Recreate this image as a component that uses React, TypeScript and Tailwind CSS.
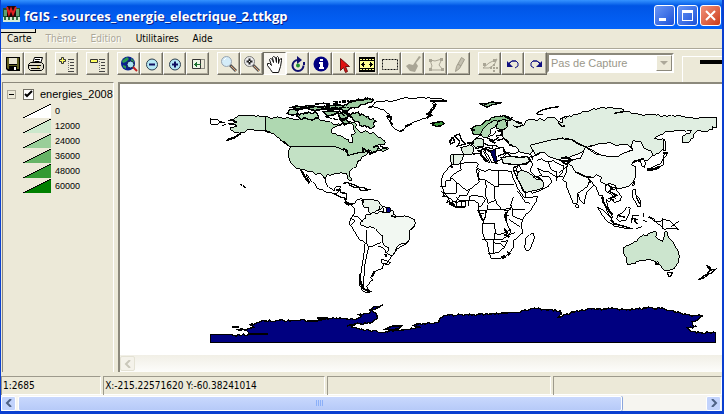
import type { ReactNode } from 'react';
import clsx from 'clsx';

const legend = [
  { label: '0', color: '#ffffff' },
  { label: '12000', color: '#cce8cc' },
  { label: '24000', color: '#99ce99' },
  { label: '36000', color: '#66b466' },
  { label: '48000', color: '#339a33' },
  { label: '60000', color: '#008000' },
];

type Tool = { label: string; icon: ReactNode; active?: boolean; disabled?: boolean };

const lens = (
  <>
    <path d="M10 10l6 6" stroke="#555" strokeWidth="3" />
    <path d="M11 11l5 5" stroke="#e0a070" strokeWidth="1" />
  </>
);

const toolGroups: Tool[][] = [
  [
    {
      label: 'Enregistrer',
      icon: (
        <>
          <path d="M2 2h14v14H4l-2-2z" fill="#000" />
          <path d="M3 3h2v11H4l-1-1zM13 3h2v11h-2z" fill="#606020" />
          <path d="M5 3h8v6H5z" fill="#e8e4d0" />
          <path d="M4 10h10v1H4z" fill="#606020" />
          <path d="M10 12h2v3h-2z" fill="#fff" />
        </>
      ),
    },
    {
      label: 'Imprimer',
      icon: (
        <g stroke="#000" fill="#fff">
          <path d="M5.500 8.500l2-6h8l-2 6" />
          <path d="M8 4.500h5M7.500 6.500h5" />
          <path d="M1.500 9.500l2-2h11l2 2v4l-2 2h-11l-2-2z" fill="#ddd9c8" />
          <path d="M2 10.500h12M4 13.500h9" />
          <path d="M10 12h2" stroke="#d0c000" />
        </g>
      ),
    },
  ],
  [
    {
      label: 'Ajouter un thème',
      icon: (
        <>
          <path d="M3.500 2.500h2v2h2v2h-2v2h-2v-2h-2v-2h2z" fill="#ffff60" stroke="#333" />
          <path d="M10 4.500h6M12 7.500h4M12 10.500h4M12 13.500h4M10 16.500h6" stroke="#444" />
          <path d="M10.500 6v10" stroke="#777" strokeDasharray="1 1" />
        </>
      ),
    },
  ],
  [
    {
      label: 'Supprimer un thème',
      icon: (
        <>
          <path d="M1.500 4.500h7v3h-7z" fill="#ffff60" stroke="#333" />
          <path d="M10 4.500h6M12 7.500h4M12 10.500h4M12 13.500h4M10 16.500h6" stroke="#444" />
          <path d="M10.500 6v10" stroke="#777" strokeDasharray="1 1" />
        </>
      ),
    },
  ],
  [
    {
      label: 'Vue globale',
      icon: (
        <>
          <circle cx="8" cy="8.500" r="7" fill="#0a2090" />
          <path d="M3 5l4-3 2 2-3 3-3 1-1-2zM11 3l3 3v3l-3-2z" fill="#2a9a50" />
          <path d="M3 10l3 1v3l-3-2z" fill="#2a9a50" />
          <circle cx="10.500" cy="9.500" r="3.500" fill="#a8e4f0" stroke="#102050" />
          <path d="M13 12l4 4" stroke="#c02020" strokeWidth="2" />
        </>
      ),
    },
    {
      label: 'Zoom arrière',
      icon: (
        <>
          <circle cx="9" cy="9.500" r="5.500" fill="#b4e8f4" stroke="#304050" />
          <path d="M6 9.500h6" stroke="#101060" strokeWidth="2" />
        </>
      ),
    },
    {
      label: 'Zoom avant',
      icon: (
        <>
          <circle cx="9" cy="9.500" r="5.500" fill="#b4e8f4" stroke="#304050" />
          <path d="M6 9.500h6M9 6.500v6" stroke="#101060" strokeWidth="2" />
        </>
      ),
    },
    {
      label: 'Zoom sur le thème',
      icon: (
        <>
          <path d="M3.500 4.500h8v9h-8z" fill="#eef6e8" stroke="#333" />
          <path d="M11.500 4.500h4v9h-4" stroke="#333" strokeDasharray="1 1" />
          <path d="M5 9.500h7M7.500 7v5M6.500 8v3" stroke="#1a7030" />
        </>
      ),
    },
  ],
  [
    {
      label: 'Loupe',
      icon: (
        <>
          {lens}
          <circle cx="6.500" cy="6.500" r="5" fill="#d4ecf8" stroke="#98a4b0" />
          <path d="M4 5l2-2" stroke="#fff" />
        </>
      ),
    },
    {
      label: 'Zoom dynamique',
      icon: (
        <>
          {lens}
          <circle cx="6.500" cy="6.500" r="5" fill="#eeeef0" stroke="#777" />
          <path d="M6.500 3.500v6M3.500 6.500h6" stroke="#222" strokeWidth="2" />
          <path d="M6 6h1v1h-1z" fill="#fff" />
        </>
      ),
    },
    {
      label: 'Déplacer',
      active: true,
      icon: (
        <path
          d="M6.500 17.500l-2-3-3-4v-2h2l2 2-2-6 1-1 2 1 1 3-1-5 1-1 2 1 1 5v-5l1-1 1 1v6l1-4 2-1v2l-1 6-2 6z"
          fill="#fff"
          stroke="#111"
        />
      ),
    },
    {
      label: 'Actualiser',
      icon: (
        <>
          <path d="M9 5a5.500 5.500 0 1 0 5.500 5.500" stroke="#101070" strokeWidth="2" />
          <path d="M8 1l5 4-5 4z" fill="#101070" />
          <path d="M14 7h2v3h-2z" fill="#101070" />
          <circle cx="9" cy="10.500" r="2" fill="#209030" />
        </>
      ),
    },
    {
      label: 'Information',
      icon: (
        <>
          <circle cx="9" cy="9" r="7.500" fill="#000080" />
          <path d="M8 4h3v2H8zM7 7h4v5h1v2H7v-2h1V9H7z" fill="#fff" />
        </>
      ),
    },
    {
      label: 'Sélectionner',
      icon: <path d="M5.500 3.500v12l3-3 2 5 2-1-2-5h4z" fill="#e01010" stroke="#701010" />,
    },
    {
      label: 'Mesurer',
      icon: (
        <>
          <path d="M1 2h16v15H1z" fill="#000" />
          <path d="M2 6h14v7H2z" fill="#ffff90" />
          <path d="M2 4.500h14M2 14.500h14" stroke="#ffff90" strokeDasharray="2 1" />
          <path d="M3 9.500h4M11 9.500h4M5.500 7v5M12.500 7v5M4.500 8v3M13.500 8v3" stroke="#000" />
        </>
      ),
    },
    {
      label: 'Sélection par rectangle',
      icon: <path d="M1.500 4.500h15v10h-15z" stroke="#111" strokeDasharray="2 1" />,
    },
    {
      label: 'Peindre',
      disabled: true,
      icon: <path d="M15 1l2 1-5 6 2 3-3 6-5-1-4-5 3-2 4 1z" fill="#a9a595" />,
    },
    {
      label: 'Editer le polygone',
      disabled: true,
      icon: (
        <>
          <path d="M3 5l5 1 7-2-3 6 4 5H3l2-4z" stroke="#a9a595" />
          <path d="M2 4h3v3H2zM13 3h3v3h-3zM2 13h3v3H2zM14 13h3v3h-3z" fill="#a9a595" />
        </>
      ),
    },
    {
      label: 'Dessiner',
      disabled: true,
      icon: (
        <>
          <path d="M11.500 2.500l3 2-5 9-4 3 1-5z" fill="#c4c0b0" stroke="#a09c8c" />
          <path d="M8 9l3 2" stroke="#a09c8c" />
        </>
      ),
    },
  ],
  [
    {
      label: 'Déplacer les points',
      disabled: true,
      icon: (
        <>
          <path d="M2 13l6-5 8-4-3 6-5 3z" stroke="#a9a595" />
          <path d="M2 8h3v3H2zM12 4h3v3h-3z" fill="#a9a595" />
          <path d="M13 9v8M9 13h8" stroke="#a9a595" strokeDasharray="2 1" strokeWidth="2" />
        </>
      ),
    },
    {
      label: 'Annuler',
      icon: (
        <>
          <path d="M5 9l3-3h4l2 2v3l-3 2" stroke="#101080" />
          <path d="M5 8l3-2h4l2 2" stroke="#101080" />
          <path d="M3 6v6h6z" fill="#101080" />
        </>
      ),
    },
    {
      label: 'Rétablir',
      icon: (
        <>
          <path d="M13 9l-3-3H6L4 8v3l3 2" stroke="#101080" />
          <path d="M13 8l-3-2H6L4 8" stroke="#101080" />
          <path d="M15 6v6H9z" fill="#101080" />
        </>
      ),
    },
  ],
];

function ToolButton({ tool }: { tool: Tool }) {
  return (
    <button
      type="button"
      aria-label={tool.label}
      disabled={tool.disabled}
      className={clsx(
        'flex h-[23px] w-[23px] shrink-0 items-center justify-center border',
        tool.active
          ? 'border-t-[#716f64] border-l-[#716f64] border-r-white border-b-white bg-[#f8f6f0]'
          : 'border-t-white border-l-white border-r-[#716f64] border-b-[#716f64] bg-[#ece9d8] shadow-[inset_-1px_-1px_0_#aca899]'
      )}
    >
      <svg width="18" height="18" viewBox="0 0 18 18" fill="none" aria-hidden="true">
        {tool.icon}
      </svg>
    </button>
  );
}

function TitleBar() {
  const button = 'flex h-[21px] w-[21px] items-center justify-center rounded-[3px] border border-white';
  return (
    <header className="flex h-[29px] items-center bg-linear-to-b from-[#3593ff] via-[#0055e5] via-20% to-[#0463fa] pr-px pl-0.5">
      <svg width="17" height="17" viewBox="0 0 17 17" className="mr-1 shrink-0" aria-hidden="true">
        <path d="M0 2h17v13H0z" fill="#1d5030" />
        <path d="M1 4h3v6H1zM13 3h3v7h-3z" fill="#60a070" />
        <path d="M4 0h9v11H4z" fill="#200808" />
        <path d="M4 1l2 7 2-5 2 5 3-7" stroke="#e02020" strokeWidth="2" fill="none" />
        <path d="M0 11h17v5H0z" fill="#d8ecd8" />
        <path d="M2 11v3M6 11v3M10 11v3M14 11v3" stroke="#307040" strokeWidth="2" />
      </svg>
      <h1 className="flex-1 truncate pt-0.5 font-['Open_Sans','Noto_Sans',sans-serif] text-[13px] leading-5 font-bold text-white [text-shadow:1px_1px_0_#0a1e8a]">
        fGIS - sources_energie_electrique_2.ttkgp
      </h1>
      <div className="flex gap-0.5 pt-0.5">
        <button type="button" aria-label="Réduire" className={clsx(button, 'bg-linear-to-br from-[#6a96f5] to-[#1c4fd8]')}>
          <svg width="19" height="19" viewBox="0 0 19 19" aria-hidden="true">
            <path d="M4 12h7v3H4z" fill="#fff" />
          </svg>
        </button>
        <button type="button" aria-label="Agrandir" className={clsx(button, 'bg-linear-to-br from-[#6a96f5] to-[#1c4fd8]')}>
          <svg width="19" height="19" viewBox="0 0 19 19" aria-hidden="true">
            <path d="M4 4h11v11H4zM5 7v7h9V7z" fill="#fff" fillRule="evenodd" />
          </svg>
        </button>
        <button type="button" aria-label="Fermer" className={clsx(button, 'bg-linear-to-br from-[#f09078] to-[#cc3a12]')}>
          <svg width="19" height="19" viewBox="0 0 19 19" aria-hidden="true">
            <path d="M5 5l9 9M14 5l-9 9" stroke="#fff" strokeWidth="2" />
          </svg>
        </button>
      </div>
    </header>
  );
}

function MenuBar() {
  const disabled = 'text-[#aca899] [text-shadow:1px_1px_0_#fff]';
  return (
    <nav className="relative flex h-5 items-center gap-[14px] border-b border-[#aca899] pl-[6px] text-[10px] leading-4">
      <span className="absolute top-0 left-0 h-[4px] w-[35px] border-r border-b border-black" />
      <button type="button">Carte</button>
      <button type="button" disabled className={disabled}>Thème</button>
      <button type="button" disabled className={disabled}>Edition</button>
      <button type="button">Utilitaires</button>
      <button type="button">Aide</button>
    </nav>
  );
}

function Toolbar() {
  return (
    <div className="flex h-[33px] items-start overflow-hidden border-t border-white pt-0.5">
      <div className="flex shrink-0 gap-2">
        {toolGroups.map((group) => (
          <div key={group[0].label} className="flex">
            {group.map((tool) => (
              <ToolButton key={tool.label} tool={tool} />
            ))}
          </div>
        ))}
      </div>
      <div className="relative mt-px flex h-5 w-[127px] shrink-0 items-center border-2 border-[#8c897c] border-r-white border-b-white bg-white">
        <select
          aria-label="Capture"
          disabled
          className="h-full w-full appearance-none pl-0.5 font-['Liberation_Sans',Arial,sans-serif] text-[11px] leading-4 text-[#9a978a] opacity-100"
        >
          <option>Pas de Capture</option>
        </select>
        <span className="pointer-events-none absolute top-0 right-0 flex h-4 w-4 items-center justify-center border border-white border-r-[#8c897c] border-b-[#8c897c] bg-[#ece9d8]">
          <svg width="8" height="5" viewBox="0 0 8 5" aria-hidden="true">
            <path d="M0 0h8L4 4z" fill="#aca899" />
          </svg>
        </span>
      </div>
      <div className="mt-1 ml-2 flex h-[26px] flex-1 justify-end border-t border-l border-white pt-[3px]">
        <div className="h-1 w-[22px] bg-black" />
      </div>
    </div>
  );
}

function LayerPanel() {
  return (
    <aside className="w-[112px] shrink-0 border-t border-r border-l border-t-[#8c897c] border-r-white border-l-[#8c897c] pt-0.5 pl-1 font-['Liberation_Sans',Arial,sans-serif]">
      <div className="flex h-[18px] items-center">
        <button
          type="button"
          aria-label="Replier"
          className="flex h-[9px] w-[9px] shrink-0 items-center justify-center border border-[#aca899]"
        >
          <span className="h-px w-[5px] bg-black" />
        </button>
        <label className="ml-[7px] grid grid-cols-[11px_1fr] items-center gap-x-[6px] text-[11px] leading-4">
          <input
            type="checkbox"
            defaultChecked
            className="peer col-start-1 row-start-1 h-[11px] w-[11px] appearance-none border border-[#716f64] bg-white"
          />
          <svg
            width="11"
            height="11"
            viewBox="0 0 11 11"
            className="pointer-events-none invisible z-10 col-start-1 row-start-1 peer-checked:visible"
            aria-hidden="true"
          >
            <path d="M2 5l2 2 5-5" stroke="#000" strokeWidth="2" fill="none" />
          </svg>
          <span className="col-start-2 row-start-1">energies_2008</span>
        </label>
      </div>
      <ul className="pl-4">
        {legend.map((item) => (
          <li key={item.label} className="flex h-[15px] items-center gap-1 text-[9px] leading-3">
            <svg width="28" height="15" viewBox="0 0 28 15" shapeRendering="crispEdges" aria-hidden="true">
              <path d="M0 15L28 1v14z" fill={item.color} />
              <path d="M0 15L28 1" stroke="#000" />
            </svg>
            {item.label}
          </li>
        ))}
      </ul>
    </aside>
  );
}

// Closed outline from "x,y x,y ..." with a ragged edge; horizontal and vertical sides stay straight
function coast(outline: string, rough = 3) {
  const points = outline.split(' ').map((pair) => pair.split(',').map(Number));
  let seed = points.length;
  let d = '';
  points.forEach(([x, y], i) => {
    const [nx, ny] = points[(i + 1) % points.length];
    d += `${i ? 'L' : 'M'}${x} ${y}`;
    if (x === nx || y === ny) return;
    const steps = Math.floor(Math.hypot(nx - x, ny - y) / 5);
    for (let s = 1; s < steps; s++) {
      seed = (seed * 137 + 59) % 1009;
      const shift = (seed / 1009 - 0.5) * 2 * rough;
      d += `L${Math.round(x + ((nx - x) * s) / steps)} ${Math.round(y + ((ny - y) * s) / steps + shift)}`;
    }
  });
  return `${d}Z`;
}

// Coastlines are digitised at three units per map pixel
function NorthAmerica() {
  return (
    <g transform="translate(200 90) scale(.3333)">
      <path d="M30 86l12 3 10 0 8 5 14 4-16 0-8 6-18-2zM65 107l12-3" fill="#fff" />
      <path
        d={coast('196,80 176,78 156,76 138,78 118,77 108,82 98,90 84,92 112,95 108,99 84,101 112,106 106,111 90,113 92,121 104,128 122,132 104,143 80,152 84,147 108,137 120,128 136,126 144,119 160,118 176,123 196,121', 2)}
        fill="#c6e2c8"
      />
      <path d="M80 152l26-10 12-10M98 92l14 4M86 102l22 2M196 122l14 6 10 0 12 10 10 8 10 12 14 8" fill="none" strokeWidth="5" />
      <path
        d={coast('196,80 214,86 232,80 246,84 262,82 290,88 312,86 330,90 346,86 366,92 386,94 396,100 410,104 430,102 446,96 462,98 470,104 466,112 474,120 488,126 496,122 510,132 524,130 538,144 548,150 556,156 552,164 530,166 518,172 536,170 532,178 548,176 562,172 566,176 548,184 534,182 520,188 504,182 496,186 474,188 456,194 446,199 440,186 428,178 410,172 390,169 270,169 262,164 246,152 232,142 218,130 196,121')}
        fill="#afd8b1"
      />
      <path
        d={coast('394,122 400,112 416,108 432,102 450,100 462,106 460,116 466,128 454,134 458,146 456,158 448,159 444,148 430,142 412,136 396,130', 2)}
        fill="#fff"
      />
      <path
        d={coast('272,169 390,169 410,172 428,178 440,186 446,199 462,192 476,188 496,186 504,184 500,194 486,200 482,210 472,216 470,228 456,238 448,246 450,260 455,270 450,272 442,262 440,250 424,248 404,250 390,256 382,252 378,262 372,262 362,250 348,254 338,246 322,244 303,238 288,234 274,220 266,200 265,182', 2)}
        fill="#c3e1c5"
      />
      <path d="M428 176l12 4 4 18M472 218l6-8M490 190l0-14 12 8M504 178l6 14 22-10M540 168l20 8M500 186l20 2" fill="none" strokeWidth="5" />
      <path
        d={coast('303,238 322,244 338,246 348,254 362,250 372,264 378,266 378,280 386,292 402,302 408,290 422,288 418,304 404,312 398,310 378,306 354,296 342,280 326,262 318,252 330,280 320,268', 2)}
        fill="#fff"
      />
      <path d="M302 240l10 18 16 22" fill="none" strokeWidth="5" />
      <path d="M408 300l14 0 0 8 18 2 0 20M404 312l14 8 16 4 4 12 14 6 10 4 14-6 10 4M430 280l12-2 18 6 18 8-14 0-18-8M478 292l10 0 14 6 12 0-14 2-18 2z" fill="none" strokeWidth="4" />
      <path d="M262 70l6-10 14-2 12 4-4 10-14 4z" fill="#afd8b1" strokeWidth="4" />
      <path d={coast('290,78 304,70 326,66 350,70 356,80 342,88 318,84 300,86', 4)} fill="#afd8b1" strokeWidth="4" />
      <path d="M276 52l14-4 20 4 14-6 12 6-18 2-18 4zM320 55l14-8 22 4 18-2 14 6-22 3-22 4zM345 42l26-2 20 3M360 52l24-4 28-4 22 4 12 8-16 4-20-4-24 2zM370 66l22-4 22 4-12 8-20 4zM415 72l18-8 14 8-6 12-20 4zM424 92l14-4 10 10-14 6z" fill="#93c196" strokeWidth="5" />
      <path d={coast('420,60 430,48 448,36 470,30 506,26 520,30 500,40 484,44 470,52 450,56 436,62', 4)} fill="#9ccba0" strokeWidth="4" />
      <path d={coast('446,74 470,68 490,74 508,86 528,94 520,102 524,108 508,114 494,106 484,108 476,96 458,88', 5)} fill="#9ccba0" strokeWidth="4" />
      <path d="M350 53h120M400 40l100-12M375 80l40 10M400 35l80-5M430 66l30 20M405 50l30 30M500 24l20 4" strokeWidth="4" strokeDasharray="14 3 6 2" fill="none" />
      <path
        d={coast('505,52 521,44 523,38 557,32 573,34 600,27 624,24 646,26 666,22 690,24 716,26 742,30 710,34 696,40 702,48 692,58 694,68 680,82 664,88 650,94 634,100 620,106 612,118 606,124 596,122 584,116 574,104 570,92 562,84 570,76 560,68 548,58 528,53', 2)}
        fill="#fff"
      />
      <path d="M708 40l-8 18-18 14 12 4-14 8M690 32l50 1M560 78l14 4-4 12 8 10M600 124l10-4M614 110l20-8" fill="none" strokeWidth="6" />
      <path d="M690 100l12-1 10-3 16-1 4 6-10 7-14 1-10-4 4-3z" fill="#3c993c" strokeWidth="4" />
      <path d="M120 283l5 3M129 287l8 8" strokeWidth="4" />
    </g>
  );
}

function SouthAmerica() {
  return (
    <g transform="translate(310 190) scale(.3333)">
      <path
        d={coast('122,42 134,40 144,28 154,24 160,30 174,28 200,31 206,37 216,49 230,55 242,63 244,75 254,81 274,79 290,81 304,89 314,98 314,110 298,124 297,152 286,164 270,170 260,178 252,192 240,206 230,220 220,224 218,236 204,240 194,246 190,256 182,262 188,270 178,280 170,290 174,298 186,306 170,308 158,302 150,288 148,270 154,244 158,216 162,188 166,158 148,148 138,132 120,104 120,92 126,82 134,70 132,54', 2)}
        fill="#fff"
      />
      <path d="M162 29l14-1 26 3 8 10 8 10-6 8-12 2-10 8-6 4-8-8 0-12-14-2-6-12z" fill="#e8f2e8" />
      <path d="M156 92l12-8 0-10 14 0 8-8 12 6 8-8 14 4 14 0 10-8 4 14 10 6 22-2 16 4 12 6 4 12-6 12-10 8-2 28-10 12-16 2-12 10-4 12-10 14-18-10 8-8-2-8-10-4-8-16 2-14-12-10-10-12-14-6-12 2-18-8 0-8z" fill="#f2f8f2" />
      <path d="M120 84l14 8-10 14M126 76l20 6 12 14M170 120l0 36M178 170l8 0 16-8 10-4M205 168l18 8 6 14M168 156l8 16-6 26-6 30-2 32 0 34M216 208l14 4 12 6-6 6-20-4zM208 48l-2 16 16 2 0-12" fill="none" />
      <path d="M150 252l2 26 8 18 22 10M106 40l10 4 14-4M156 28l4 10M194 244l-8 16M226 192l4 10" fill="none" strokeWidth="6" />
      <path d="M229 54h12v13h-12z" fill="#000080" />
      <path d="M104 36l12 8 12-2M244 78l14 4" strokeWidth="5" fill="none" />
    </g>
  );
}

function Africa() {
  return (
    <g transform="translate(430 90) scale(.3333)" fill="#fff">
      <path d="M66 225l14 0 10-4 20-3 30-1 5 6-5 12 12 4 14 6 10-6 14 2 24 2 16-1 15 3 3 18 8 14 8 20 10 14 10 12 12 0 26-4-4 16-16 26-16 14-8 14-4 16 4 24-14 12-12 10-2 22-14 18-14 12-28 4-10 0-8-24-4-24-12-22-4-24 4-18-6-18-10-18 2-18-12-8-18-2-20 4-20 2-20-14-14-16-6-20-2-18 8-20 14-16 12-16z" />
      <g fill="none">
        <path d="M90 222l4 18-16 8-16 12 0 12-14 0 0 18-18 0M62 262l48 40 10-4 28-22-4-16-6-24M80 276l-2 34-36 0-8-6M140 236l8 6-4 18 6 10 12-2 34 22 9 0M205 240v50M205 283h48M195 290l-2 30 8 22 14 16 28-2M165 272l4 16-4 26 6 12 2 14 22-8" />
        <path d="M118 300l-8 16-20 0-12 18M118 320l12-4 30 4 6 10-14 20-8 0M118 320l-2 28M60 345l10-12 10 2 0 18M94 334l2 18M106 332l2 20M36 320l14-2 8 14-10 8M80 322l10 10 20 0" />
        <path d="M142 362l24-2 0 20-8 14M170 360l-6 30M146 370l16 0M172 346l2 14 40-2 18 4 12-4M232 362l-4 26 6 20 6 12-20 10-12 4-12-4-2-28-38 0M155 450l40 0 0-20M195 450l20 0 24-18 4-14M190 450l0 42-16-2M190 458l24 4 10 10-18 14-14 4M212 456l22-4-10 18M218 430l12 8 24-10M236 388l34 22M246 358l2 20 28 12M250 320l-8 26 8 14 34 0M262 302l24 34 14 4M245 345l-6 14M226 378h12" />
        <path d="M222 416l10 12-6 8 12 6M228 366l-4 14 6 14M146 364l10 24M50 332l24 12M40 308l2 14M56 340l24 12 24-2M62 226l6 8" strokeWidth="5" />
        <path d="M216 500l8-4 2 6-8 4zM234 486l6 4-4 4z" strokeWidth="4" />
      </g>
      <path d="M287 446l12-12 12-5 2 16-8 20-6 14-10 4-6-12 4-12z" />
    </g>
  );
}

function Eurasia() {
  return (
    <g transform="translate(430 90) scale(.3333)" fill="#fff">
      {/* southern Asia and the Middle East */}
      <path d="M248 238l16-12 28-4 4-20 24-6 16-10 24 6 24 4 30 10 10 12 18 14 24 24 34 12-2 14-14 10-14 16-6 24-2 10-10-8-10-26-10-14-4-20-14-4-16-10-24-2-18-12-12 0-22-12 14 24 22 2 8 14-12 16-24 12-24 8-8-8-14-34-14-20z" />
      <path d="M262 249l14-9 22 9 20 18 16 2 8 10-4 16-20 6-22 4-10 6-8-8-6-20-12-18z" fill="#deecdf" />
      <path d="M298 202l10 22-8 18 20 22M320 212l14-6 16 10 20-4 16 10 16 6M354 214l8 24 18 8 0 26M402 224l-4 22-20 22M424 220l-24 18-14 12M286 302l2 18M268 220l-10 22M250 232l16-6 10 14M310 262l24-6" fill="none" />
      <path d="M312 258l20 8 6 8M372 202l24 10 20 2M385 206l18 16M294 186l10 10 4 14M250 240l14 30 20 38M440 305l10-12 12-4 20-14" fill="none" strokeWidth="4" />
      {/* Russia and the central republics */}
      <path
        d={coast('232,88 248,90 270,98 278,104 264,110 250,106 262,112 284,104 286,94 300,90 326,88 342,92 352,84 376,84 386,94 398,98 396,88 412,80 440,74 460,66 482,60 510,54 540,52 560,54 582,60 570,66 552,70 580,66 602,68 640,76 668,74 700,78 730,76 762,78 790,84 820,83 860,83 860,112 846,110 850,118 826,124 800,122 792,132 788,146 770,158 758,158 756,142 778,130 784,120 764,122 740,122 710,126 694,132 674,146 704,150 704,172 686,190 662,200 668,190 658,180 634,172 628,156 610,152 600,170 574,164 556,170 510,160 472,172 444,160 426,148 392,146 362,150 330,158 300,166 310,184 300,194 276,188 254,180 250,170 234,164 230,150 216,140 212,126 232,110')}
        fill="#e0eee1"
      />
      <path d="M300 166l30-8 34-8 28-4 34 4 20 14 26 8-18 16-22 8-24 10-28 2-24-8-14-14-18 4-8 4-10-18z" fill="#e4f1e5" />
      <path d="M472 172l32-10 36-4 18 8 34-4 8 10 10 6-20 8-20 14-52-2-22-12z" />
      <path
        d="M466 172l14 8 18 12 28 6 36 2 22-12 24-8-4-12 6-16 24 4 8 18 22 10 4 12-14 14-20 4-22-2-8 12 14 6-2 14 2 12-8 18-16 16-26 6-18 0-14-8-14-4-14-14-16-4-12 4-36-12-14-16-16-16 4-10 16-8 18-4z"
        fill="#f3f9f4"
      />
      <path d="M412 220l14 8 10 18 36 16 6 10-6 18-28 20-2 30-12 0-12-30-8-18-2-16-10-6 12-26z" fill="#f9fcf9" />
      <path d="M394 205l16-4 14 8-14 14-12-8 24-2M436 246l36 16 12-2M384 98l12 12 10-4M390 88l20-10" strokeWidth="5" fill="none" />
      <path d="M440 342l8 6-4 6-8-4z" />
      <path d="M474 262l16 0 10-8 14 8-2 14 16 8 10-4 18 6 2 12 16 22-4 12-16 6-10-10-8 8-8-8 6 24 10 20 4 12-12-10-12-30-6-28-10 0-10-24zM528 284l0 20 18 10 12 14M540 300l14 0" />
      <path d="M534 284l12 10-8 10 22 12-20 10 12 6M550 292l16 4M516 322l4 16 18 26 10 10" strokeWidth="5" fill="none" />
      <path d="M502 352l14 6 18 16 18 22 0 8-16-6-16-18zM550 402l18 4 24 6 18 4-20 0-38-8zM618 416l18-6M563 374l12-4 18-20 8 4-4 18-8 18-22 4-6-8zM609 300l8-2 0 16 14 16 2 18-10 2-8-16-8-12zM610 278l4-6 0 12-6 4zM640 368l2 14M638 392l12 2M656 380l16 6 4 8 14 2 12-8 20 6 12 12 12 12-20-4-22 4-14-12-16-12zM698 384v32M722 412l24-18" />
      <path d="M606 378l20-2M608 378l-4 20M610 386l10 2-6 4 8 10M654 382l18 4M562 376l24 6M618 320l12 22M540 390l12 10 40 12" fill="none" strokeWidth="4" />
      <path d="M632 208l8-4 6 14-2 14-10-6zM652 236l12-2 16-8 14-6 6-16 4-18 10 4-12 14-2 20-20 14-24 4zM702 150l6 6-2 26-6 0z" />
      <path d="M650 240l22-4 20-8M700 190l14 0M610 218l16-8 14-4" fill="none" strokeWidth="5" />
      {/* Europe */}
      <path d="M128 152l26-18 10 8 24-6 12-14 12 2 6 18 16 10 4 14 22 6 8 12-14 8-20-4-12 10-22 20-14 0-12-24-14-10 20 34-14-4-18-24-28 2z" />
      <path d="M62 194l38-1-2 14-12 16-22 0-2-12z" fill="#e3f0e3" />
      <path d="M72 196l-2 26M92 172l16-2 12-6 12 10-4 18-28 1z" fill="#dcecdc" />
      <path d="M130 152l14-8 16 4 2 20-26 4-8-8z" fill="#d2e8d3" />
      <path d="M74 138l14-6 6 16 12 14-24 6 8-12zM58 152l12-8 4 12-12 6z" strokeWidth="4" />
      <path d={coast('122,116 136,108 152,106 166,94 188,82 222,76 246,84 240,92 208,92 188,94 168,110 160,126 144,134 130,132', 3)} fill="#8bc48e" strokeWidth="4" />
      <path d="M152 132l8-16 14-14 22-12 8 6-8 14-16 8 2 10-10 16-12-2z" fill="#b5dab7" />
      <path d="M204 96l22-10 6 26-16 8-18-6z" fill="#a7d2aa" />
      <path d="M214 204l26-6 26 4 26-2 8 14-16 8-30 2-34-4z" fill="#e7f2e7" strokeWidth="4" />
      <path d="M160 158l14 8 24 0 12 10M166 142l26 10 14-10M150 182l20-10 16 4 4-12M204 124l12-2 2 12-20 4M200 152l22-6 16 14M196 176l24-4 6 18-22 8M220 182l20 12M136 176l20-4 12 14M130 192l18-2" fill="none" strokeWidth="4" />
      <path d="M68 142l-10 14M112 160l20 0M164 174l16 10 14-2M142 180l14 8M150 190l22 24M196 206l4 16M224 78l20 12M124 118l12 4M258 96l18 4M176 148l20 12" fill="none" strokeWidth="6" />
      <path d="M180 182l16-4 2 20 4 16-8 2-8-18z" fill="#000060" />
      <path d="M148 40l20 2 16-6 32 2-28 6-18 8z" fill="#8fbc92" strokeWidth="4" />
      <path d="M318 72l14-10 26-8 30-4M320 72l18 2" fill="none" strokeWidth="4" />
    </g>
  );
}

function Oceania() {
  return (
    <g transform="translate(550 90) scale(.3333)" fill="#cce5ce">
      <path
        d={coast('220,472 232,466 244,462 262,452 268,442 280,434 290,438 300,428 312,424 322,428 316,440 330,450 338,454 342,440 346,422 352,428 356,444 370,456 374,468 386,484 388,500 384,518 374,534 356,542 340,538 330,526 322,514 318,524 314,514 300,508 282,512 264,514 250,522 232,524 230,506 220,488', 2)}
      />
      <path d="M352 548h15l-4 10-7 2zM316 514l10 12" fill="#fff" strokeWidth="4" />
      <path d="M470 526l10 6 2 8 14-2-10 10-10 4-12 10-18 8 12-10 14-8 8-12z" fill="#fff" strokeWidth="4" />
    </g>
  );
}

function Antarctica() {
  return (
    <g transform="translate(200 290) scale(.3333)" fill="#000080" strokeWidth="4">
      <path
        d={coast('31,158 31,133 92,133 100,136 150,134 146,128 134,120 110,117 146,116 164,112 150,104 172,98 184,93 300,91 312,89 324,93 354,93 380,86 410,84 450,88 476,84 484,78 476,74 500,70 512,66 508,60 524,50 548,44 534,52 512,62 530,70 532,84 520,94 500,100 466,102 450,108 480,118 510,122 546,128 570,122 610,120 640,116 662,112 640,106 680,100 716,96 722,84 740,76 820,74 900,71 926,68 956,68 976,60 1010,56 1040,60 1082,62 1084,72 1074,82 1100,72 1120,66 1160,58 1240,56 1300,59 1340,54 1380,55 1400,60 1440,68 1470,76 1508,78 1496,88 1476,94 1478,106 1492,110 1462,114 1470,122 1500,128 1546,129 1546,158')}
      />
      <path d="M96 111l22 0M352 84l32 0-20 6zM556 118l22-10 26 0-6 8-24 4zM145 133h60M440 108l26-6-12 8" strokeWidth="5" />
    </g>
  );
}

function WorldMap() {
  return (
    <svg
      viewBox="120 84 602 271"
      preserveAspectRatio="xMinYMin meet"
      className="min-h-0 w-full flex-1"
      stroke="#000"
      strokeWidth="3"
      shapeRendering="crispEdges"
      role="img"
      aria-label="energies_2008"
    >
      <NorthAmerica />
      <SouthAmerica />
      <Africa />
      <Eurasia />
      <Oceania />
      <Antarctica />
    </svg>
  );
}

function Chevron({ right }: { right?: boolean }) {
  return (
    <svg width="8" height="8" viewBox="0 0 8 8" fill="none" stroke="currentColor" strokeWidth="2" aria-hidden="true">
      <path d={right ? 'M2 0l4 4-4 4' : 'M6 0L2 4l4 4'} />
    </svg>
  );
}

function StatusBar() {
  const cell = 'border-t border-l border-r border-t-[#9d9a8c] border-l-[#9d9a8c] border-r-white pl-px';
  return (
    <footer className="mt-1 grid h-[19px] grid-cols-[100fr_222fr_223fr_169fr] gap-0.5 border-b border-white text-[10px] leading-[18px]">
      <div className={cell}>1:2685</div>
      <div className={cell}>X:-215.22571620 Y:-60.38241014</div>
      <div className={cell} />
      <div className={cell} />
    </footer>
  );
}

function WindowScrollbar() {
  const arrow =
    'flex h-[15px] w-[15px] shrink-0 items-center justify-center rounded-[2px] border border-white bg-[#c2d3fc] text-[#4d6185]';
  return (
    <div className="flex h-4 items-center gap-0.5 bg-[#f6f5f0] pr-px">
      <button type="button" aria-label="Défiler à gauche" className={arrow}>
        <Chevron />
      </button>
      <div className="flex flex-1">
        <div className="flex h-[15px] w-[88%] items-center justify-center gap-px rounded-[2px] border border-white bg-linear-to-b from-[#c9d8fd] to-[#b6caf8] shadow-[1px_0_0_#8ba5dc]">
          <span className="h-[6px] w-px bg-[#8cb0f8]" />
          <span className="h-[6px] w-px bg-[#8cb0f8]" />
          <span className="h-[6px] w-px bg-[#8cb0f8]" />
          <span className="h-[6px] w-px bg-[#8cb0f8]" />
        </div>
      </div>
      <button type="button" aria-label="Défiler à droite" className={arrow}>
        <Chevron right />
      </button>
    </div>
  );
}

export default function App() {
  return (
    <div className="flex min-h-screen flex-col border-r-2 border-b-[3px] border-l border-[#0a3fd0] bg-[#ece9d8] font-['DejaVu_Sans_Condensed','DejaVu_Sans',sans-serif] text-black">
      <TitleBar />
      <MenuBar />
      <Toolbar />
      <main className="flex flex-1 gap-1 pl-px">
        <LayerPanel />
        <section className="flex min-w-0 flex-1 flex-col border-t-2 border-l-2 border-[#8c897c] bg-white">
          <WorldMap />
          <div className="flex h-[17px] shrink-0 items-center bg-linear-to-b from-[#f1efe6] to-[#fdfdfb]">
            <button
              type="button"
              aria-label="Défiler la carte à gauche"
              disabled
              className="flex h-[15px] w-[15px] items-center justify-center rounded-[2px] border border-[#e4e2d4] bg-[#f4f2ea] text-[#c9c7ba]"
            >
              <Chevron />
            </button>
          </div>
        </section>
      </main>
      <StatusBar />
      <WindowScrollbar />
    </div>
  );
}
